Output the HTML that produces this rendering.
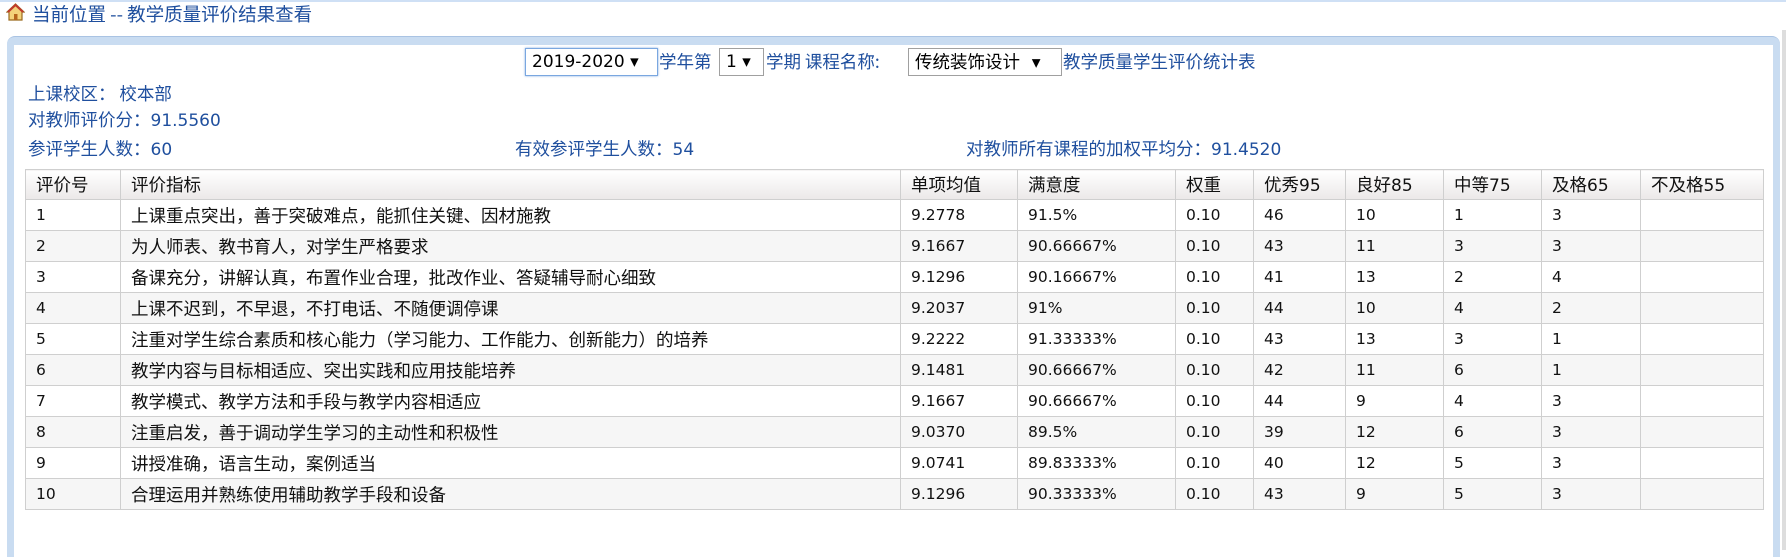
<!DOCTYPE html>
<html><head><meta charset="utf-8"><style>
body{margin:0;width:1786px;height:550px;overflow:hidden;background:#fff;font-family:"DejaVu Sans","Noto Sans CJK SC",sans-serif;font-size:15px;position:relative}
.b{color:#1f4f9e}
.abs{position:absolute;white-space:nowrap}
.panel{position:absolute;left:7px;top:36px;width:1773px;height:520px;background:#c9dcf1;border-radius:8px 8px 0 0;border-top:1px solid #a9c3e3}
.inner{position:absolute;left:7px;top:8px;right:7px;bottom:0;background:#fff}
.sel{position:absolute;border:1px solid #a0a0a0;background:#fff;color:#000;height:28px;line-height:27px;box-sizing:border-box;padding-left:6px;font-size:16px}
table{position:absolute;left:25px;top:169px;border-collapse:collapse;table-layout:fixed;width:1738px}
td,th{border:1px solid #cfcfcf;height:30px;padding:0 0 0 10px;text-align:left;font-weight:normal;font-size:15.5px;color:#111;white-space:nowrap;overflow:hidden}
th{background:linear-gradient(#fff,#ebe8e8);height:29px}
tr:nth-child(odd) td{background:#f6f6f6}
.cn{font-family:"Noto Sans CJK SC",sans-serif;font-size:17.5px}
.n{font-size:17px}
</style></head><body>
<div style="position:absolute;left:0;top:0;width:1786px;height:2px;background:#cfe0f5"></div>
<svg class="abs" style="left:6px;top:3px" width="19" height="18" viewBox="0 0 19 18"><path d="M1 9 L9.5 1 L18 9 L16 9 L16 17 L3 17 L3 9 Z" fill="#f3d27a" stroke="#9a6a1e" stroke-width="1.2"/><path d="M2 9 L9.5 2 L17 9" fill="none" stroke="#c0392b" stroke-width="2"/><rect x="8" y="11" width="3.5" height="6" fill="#b5651d"/></svg>
<div class="abs b cn" style="left:32px;top:1px;font-size:18.5px">当前位置 -- 教学质量评价结果查看</div>
<div class="panel"><div class="inner"></div></div>
<div class="sel" style="left:525px;top:48px;width:133px;border:1px solid #7aa7e0;box-shadow:0 0 2px #7aa7e0;font-size:17px">2019-2020 ▾</div>
<div class="abs b cn" style="left:659px;top:49px">学年第</div>
<div class="sel" style="left:719px;top:48px;width:45px;font-size:17px">1 ▾</div>
<div class="abs b cn" style="left:766px;top:49px">学期 课程名称:</div>
<div class="sel cn" style="left:908px;top:48px;width:154px;line-height:25px">传统装饰设计 &nbsp;&nbsp;▾</div>
<div class="abs b cn" style="left:1063px;top:49px">教学质量学生评价统计表</div>
<div class="abs b" style="left:28px;top:81px"><span class="cn">上课校区： 校本部</span></div>
<div class="abs b" style="left:28px;top:107px"><span class="cn">对教师评价分：</span><span class="n">91.5560</span></div>
<div class="abs b" style="left:28px;top:136px"><span class="cn">参评学生人数：</span><span class="n">60</span></div>
<div class="abs b" style="left:515px;top:136px"><span class="cn">有效参评学生人数：</span><span class="n">54</span></div>
<div class="abs b" style="left:966px;top:136px"><span class="cn">对教师所有课程的加权平均分：</span><span class="n">91.4520</span></div>
<table>
<colgroup><col style="width:95px"><col style="width:780px"><col style="width:117px"><col style="width:158px"><col style="width:78px"><col style="width:92px"><col style="width:98px"><col style="width:98px"><col style="width:99px"><col style="width:123px"></colgroup>
<tr><th class="cn">评价号</th><th class="cn">评价指标</th><th class="cn">单项均值</th><th class="cn">满意度</th><th class="cn">权重</th><th><span class="cn">优秀</span><span class="n">95</span></th><th><span class="cn">良好</span><span class="n">85</span></th><th><span class="cn">中等</span><span class="n">75</span></th><th><span class="cn">及格</span><span class="n">65</span></th><th><span class="cn">不及格</span><span class="n">55</span></th></tr>
<tr><td>1</td><td class="cn">上课重点突出，善于突破难点，能抓住关键、因材施教</td><td>9.2778</td><td>91.5%</td><td>0.10</td><td>46</td><td>10</td><td>1</td><td>3</td><td></td></tr>
<tr><td>2</td><td class="cn">为人师表、教书育人，对学生严格要求</td><td>9.1667</td><td>90.66667%</td><td>0.10</td><td>43</td><td>11</td><td>3</td><td>3</td><td></td></tr>
<tr><td>3</td><td class="cn">备课充分，讲解认真，布置作业合理，批改作业、答疑辅导耐心细致</td><td>9.1296</td><td>90.16667%</td><td>0.10</td><td>41</td><td>13</td><td>2</td><td>4</td><td></td></tr>
<tr><td>4</td><td class="cn">上课不迟到，不早退，不打电话、不随便调停课</td><td>9.2037</td><td>91%</td><td>0.10</td><td>44</td><td>10</td><td>4</td><td>2</td><td></td></tr>
<tr><td>5</td><td class="cn">注重对学生综合素质和核心能力（学习能力、工作能力、创新能力）的培养</td><td>9.2222</td><td>91.33333%</td><td>0.10</td><td>43</td><td>13</td><td>3</td><td>1</td><td></td></tr>
<tr><td>6</td><td class="cn">教学内容与目标相适应、突出实践和应用技能培养</td><td>9.1481</td><td>90.66667%</td><td>0.10</td><td>42</td><td>11</td><td>6</td><td>1</td><td></td></tr>
<tr><td>7</td><td class="cn">教学模式、教学方法和手段与教学内容相适应</td><td>9.1667</td><td>90.66667%</td><td>0.10</td><td>44</td><td>9</td><td>4</td><td>3</td><td></td></tr>
<tr><td>8</td><td class="cn">注重启发，善于调动学生学习的主动性和积极性</td><td>9.0370</td><td>89.5%</td><td>0.10</td><td>39</td><td>12</td><td>6</td><td>3</td><td></td></tr>
<tr><td>9</td><td class="cn">讲授准确，语言生动，案例适当</td><td>9.0741</td><td>89.83333%</td><td>0.10</td><td>40</td><td>12</td><td>5</td><td>3</td><td></td></tr>
<tr><td>10</td><td class="cn">合理运用并熟练使用辅助教学手段和设备</td><td>9.1296</td><td>90.33333%</td><td>0.10</td><td>43</td><td>9</td><td>5</td><td>3</td><td></td></tr>
</table>
<div style="position:absolute;left:1782px;top:30px;width:4px;height:520px;background:#ddd"></div>
</body></html>
